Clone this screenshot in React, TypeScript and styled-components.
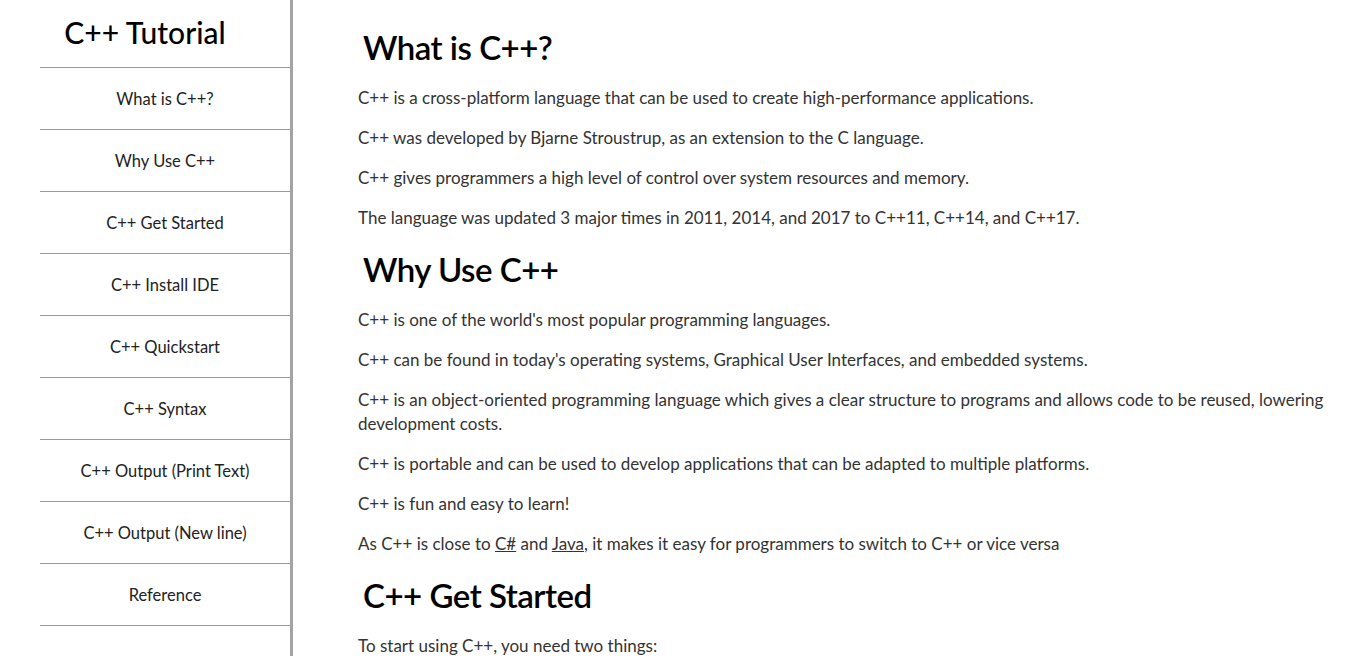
import React from "react";
import styled, { createGlobalStyle } from "styled-components";

const Global = createGlobalStyle`
  html, body { margin: 0; padding: 0; background: #fff; }
  body { font-family: Lato, "Open Sans", sans-serif; }
`;

const Page = styled.div`
  display: flex;
  min-height: 656px;
`;

const Sidebar = styled.nav`
  width: 290px;
  flex-shrink: 0;
  border-right: 3px solid #a3a3a3;
`;

const SideTitle = styled.h1`
  margin: 0;
  height: 67px;
  display: flex;
  align-items: center;
  justify-content: center;
  font-size: 30px;
  font-weight: 500;
  color: #000;
  padding-bottom: 3px;
  box-sizing: border-box;
`;

const NavList = styled.ul`
  list-style: none;
  margin: 0 0 0 40px;
  padding: 0;
  border-top: 1px solid #9a9a9a;
`;

const NavItem = styled.li`
  height: 62px;
  box-sizing: border-box;
  border-bottom: 1px solid #9a9a9a;
  display: flex;
  align-items: center;
  justify-content: center;
  font-size: 16.5px;
  color: #222;
`;

const Main = styled.main`
  flex: 1;
  padding: 8px 12px 0 65px;
  color: #333;
`;

const Heading = styled.h2`
  margin: 17px 0 17px 5px;
  font-size: 33px;
  line-height: 44px;
  font-weight: 600;
  letter-spacing: -0.5px;
  color: #000;
`;

const Para = styled.p`
  margin: 0 0 16px;
  font-size: 17px;
  line-height: 24px;
`;

const Link = styled.a`
  color: inherit;
  text-decoration: underline;
`;

const nav = [
  "What is C++?",
  "Why Use C++",
  "C++ Get Started",
  "C++ Install IDE",
  "C++ Quickstart",
  "C++ Syntax",
  "C++ Output (Print Text)",
  "C++ Output (New line)",
  "Reference",
];

export default function App() {
  return (
    <>
      <Global />
      <Page>
        <Sidebar>
          <SideTitle>C++ Tutorial</SideTitle>
          <NavList>
            {nav.map((n) => (
              <NavItem key={n}>{n}</NavItem>
            ))}
          </NavList>
        </Sidebar>
        <Main>
          <Heading>What is C++?</Heading>
          <Para>C++ is a cross-platform language that can be used to create high-performance applications.</Para>
          <Para>C++ was developed by Bjarne Stroustrup, as an extension to the C language.</Para>
          <Para>C++ gives programmers a high level of control over system resources and memory.</Para>
          <Para>The language was updated 3 major times in 2011, 2014, and 2017 to C++11, C++14, and C++17.</Para>
          <Heading>Why Use C++</Heading>
          <Para>C++ is one of the world's most popular programming languages.</Para>
          <Para>C++ can be found in today's operating systems, Graphical User Interfaces, and embedded systems.</Para>
          <Para>C++ is an object-oriented programming language which gives a clear structure to programs and allows code to be reused, lowering development costs.</Para>
          <Para>C++ is portable and can be used to develop applications that can be adapted to multiple platforms.</Para>
          <Para>C++ is fun and easy to learn!</Para>
          <Para>
            As C++ is close to <Link>C#</Link> and <Link>Java</Link>, it makes it easy for programmers to switch to C++ or vice versa
          </Para>
          <Heading>C++ Get Started</Heading>
          <Para>To start using C++, you need two things:</Para>
        </Main>
      </Page>
    </>
  );
}
